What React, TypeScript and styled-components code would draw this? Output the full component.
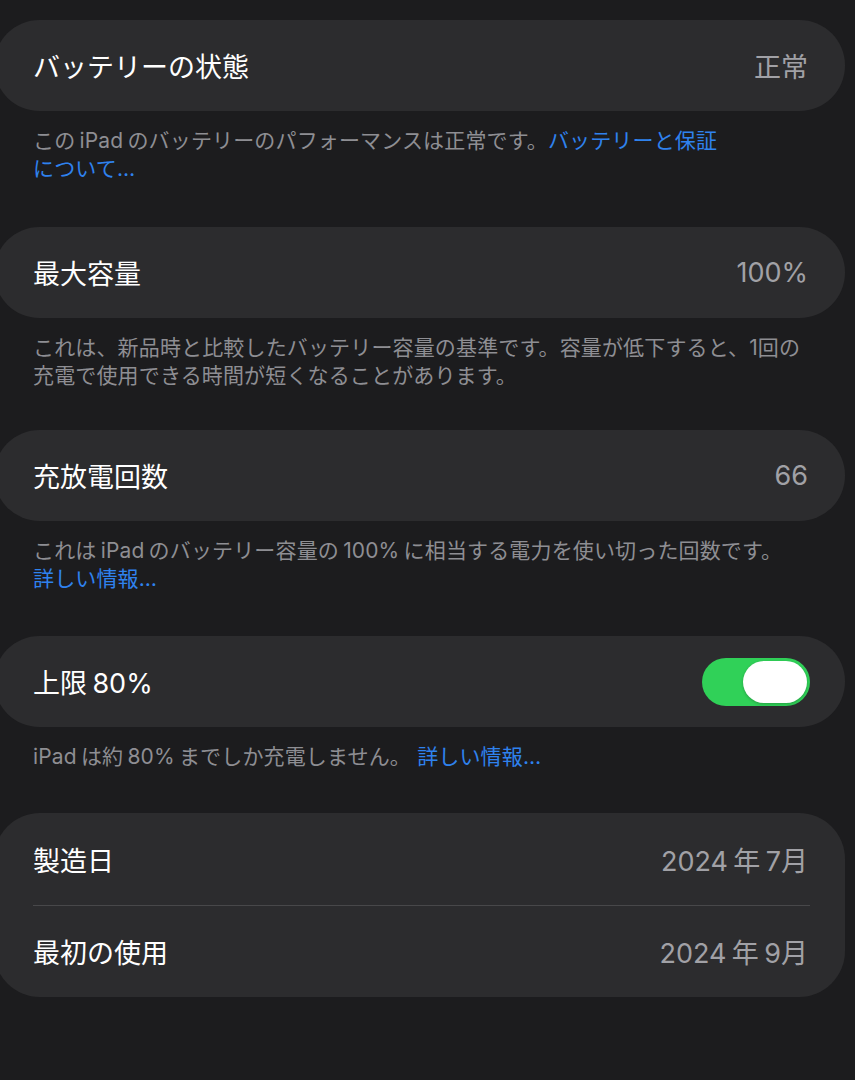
import React from "react";
import styled, { createGlobalStyle } from "styled-components";

const Global = createGlobalStyle`
  html, body {
    margin: 0;
    padding: 0;
    background: #1c1c1e;
  }
  body {
    font-family: "Inter", "Noto Sans CJK JP", sans-serif;
    -webkit-font-smoothing: antialiased;
  }
`;

const Page = styled.div`
  width: 855px;
  min-height: 1080px;
  box-sizing: border-box;
  padding-top: 20px;
  background: #1c1c1e;
  overflow: hidden;
`;

const Card = styled.div`
  margin-left: -6px;
  margin-right: 10px;
  background: #2c2c2e;
  border-radius: 46px;
  display: flex;
  flex-direction: column;
`;

const Row = styled.div<{ $h?: number }>`
  height: ${(p) => p.$h ?? 91}px;
  box-sizing: border-box;
  padding: 0 37px 0 39px;
  display: flex;
  align-items: center;
  justify-content: space-between;
`;

const Separator = styled.div`
  height: 1px;
  margin: 0 35px 0 39px;
  background: #48484a;
`;

const Title = styled.span`
  font-size: 27px;
  color: #ffffff;
`;

const Value = styled.span`
  font-size: 27px;
  color: #a1a1a6;
`;

const Footer = styled.div<{ $bottom?: number }>`
  padding: 16px 20px ${(p) => p.$bottom ?? 44}px 33px;
  font-size: 21px;
  letter-spacing: 0.15px;
  line-height: 28px;
  color: #8e8e93;
  white-space: nowrap;
`;

const Link = styled.span`
  color: #2f82ee;
`;

const Latin = styled.span`
  margin: 0 0.2em;
`;

const Gap = styled.span`
  display: inline-block;
  width: 2px;
`;

const Toggle = styled.div`
  width: 108px;
  height: 48px;
  border-radius: 24px;
  background: #30d158;
  position: relative;
  margin-right: -2px;
`;

const Knob = styled.div`
  position: absolute;
  top: 3px;
  right: 3px;
  width: 64px;
  height: 42px;
  border-radius: 21px;
  background: #ffffff;
  box-shadow: 0 1px 3px rgba(0, 0, 0, 0.25);
`;

export default function App() {
  return (
    <Page>
      <Global />
      <Card>
        <Row>
          <Title>バッテリーの状態</Title>
          <Value>正常</Value>
        </Row>
      </Card>
      <Footer>
        この<Latin>iPad</Latin>のバッテリーのパフォーマンスは正常です。<Link>バッテリーと保証</Link>
        <br />
        <Link>について…</Link>
      </Footer>

      <Card>
        <Row>
          <Title>最大容量</Title>
          <Value>100%</Value>
        </Row>
      </Card>
      <Footer $bottom={40}>
        これは、新品時と比較したバッテリー容量の基準です。容量が低下すると、1回の
        <br />
        充電で使用できる時間が短くなることがあります。
      </Footer>

      <Card>
        <Row>
          <Title>充放電回数</Title>
          <Value>66</Value>
        </Row>
      </Card>
      <Footer $bottom={43}>
        これは<Latin>iPad</Latin>のバッテリー容量の<Latin>100%</Latin>に相当する電力を使い切った回数です。
        <br />
        <Link>詳しい情報…</Link>
      </Footer>

      <Card>
        <Row>
          <Title>
            上限<Latin>80%</Latin>
          </Title>
          <Toggle>
            <Knob />
          </Toggle>
        </Row>
      </Card>
      <Footer $bottom={42}>
        iPad<Latin>は約</Latin>80%<Latin>までしか充電しません。</Latin>
        <Gap />
        <Link>詳しい情報…</Link>
      </Footer>

      <Card>
        <Row $h={92}>
          <Title>製造日</Title>
          <Value>
            2024<Latin>年</Latin>7月
          </Value>
        </Row>
        <Separator />
        <Row $h={91}>
          <Title>最初の使用</Title>
          <Value>
            2024<Latin>年</Latin>9月
          </Value>
        </Row>
      </Card>
    </Page>
  );
}
